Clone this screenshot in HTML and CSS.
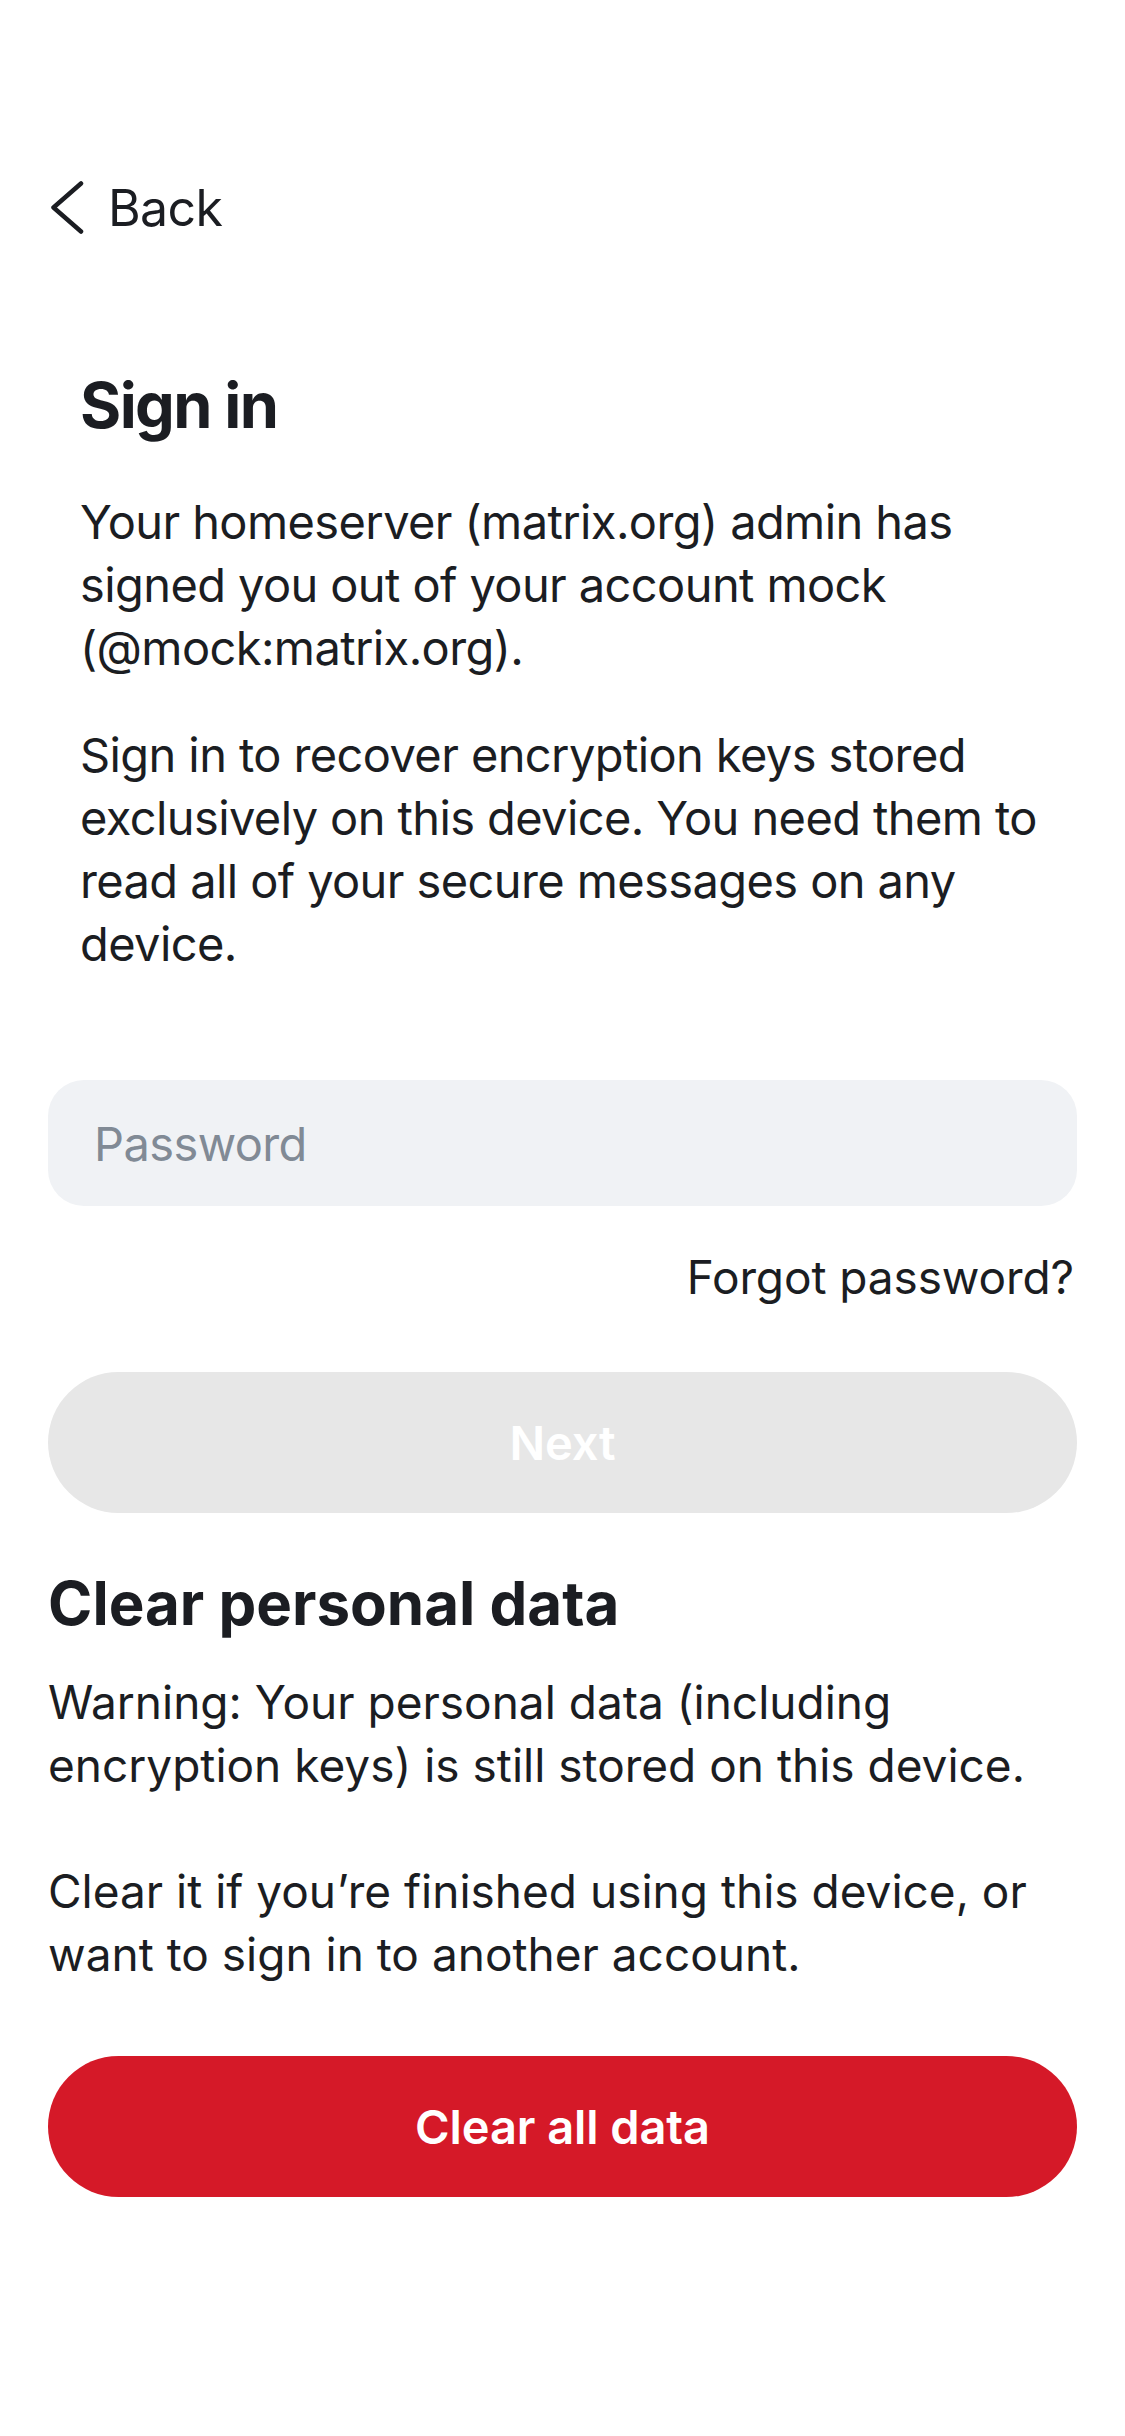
FILE: index.html
```html
<!DOCTYPE html>
<html lang="en">
<head>
<meta charset="utf-8">
<title>Sign in</title>
<link rel="stylesheet" href="styles.css">
</head>
<body>
<div class="screen">
  <nav class="nav">
    <svg class="chevron" width="34" height="56" viewBox="0 0 34 56" aria-hidden="true">
      <path d="M31 3.5 L3.5 27.5 L31 51.5" fill="none" stroke="#1b1d22" stroke-width="4.5" stroke-linecap="round" stroke-linejoin="round"/>
    </svg>
    <span class="nav-label">Back</span>
  </nav>

  <section class="intro">
    <h1 class="title">Sign in</h1>
    <p class="body-text">Your homeserver (matrix.org) admin has signed you out of your account mock (@mock:matrix.org).</p>
    <p class="body-text second">Sign in to recover encryption keys stored exclusively on this device. You need them to read all of your secure messages on any device.</p>
  </section>

  <section class="form">
    <div class="field"><span class="placeholder">Password</span></div>
    <div class="forgot-row"><span class="forgot">Forgot password?</span></div>
    <div class="btn btn-disabled">Next</div>
  </section>

  <section class="clear">
    <h2 class="subtitle">Clear personal data</h2>
    <p class="warn-text">Warning: Your personal data (including encryption keys) is still stored on this device.</p>
    <p class="warn-text gap">Clear it if you&rsquo;re finished using this device, or want to sign in to another account.</p>
    <div class="btn btn-danger">Clear all data</div>
  </section>
</div>
</body>
</html>
```

FILE: styles.css
```css
* { box-sizing: border-box; }

html, body {
  margin: 0;
  padding: 0;
  background: #ffffff;
}

body {
  font-family: Inter, "Noto Sans", "Liberation Sans", sans-serif;
  color: #1b1d22;
  width: 1125px;
  min-height: 2436px;
}

.screen {
  display: flex;
  flex-direction: column;
}

.nav {
  display: flex;
  align-items: center;
  gap: 24px;
  height: 60px;
  margin-top: 178px;
  padding-left: 50px;
}

.chevron { display: block; flex: none; }

.nav-label {
  font-size: 50px;
  line-height: 60px;
  letter-spacing: -0.6px;
}

.intro {
  padding: 0 48px 0 80px;
}

.title {
  margin: 128px 0 0 0;
  font-size: 63px;
  line-height: 78px;
  font-weight: 700;
  letter-spacing: -1.6px;
}

.body-text {
  margin: 46px 0 0 0;
  font-size: 47px;
  line-height: 63px;
  letter-spacing: -0.6px;
}

.body-text.second { margin-top: 44px; }

.form {
  padding: 0 48px;
  margin-top: 105px;
}

.field {
  height: 126px;
  border-radius: 36px;
  background: #f0f2f5;
  display: flex;
  align-items: center;
  padding-left: 46px;
}

.placeholder {
  font-size: 47px;
  color: #818a95;
  letter-spacing: -0.6px;
}

.forgot-row {
  display: flex;
  justify-content: flex-end;
  margin-top: 44px;
  padding-right: 3px;
}

.forgot {
  font-size: 46px;
  line-height: 54px;
  letter-spacing: -0.1px;
}

.btn {
  display: flex;
  align-items: center;
  justify-content: center;
  height: 141px;
  border-radius: 71px;
  font-size: 47px;
  font-weight: 600;
  letter-spacing: -0.1px;
  color: #ffffff;
}

.btn-disabled {
  margin-top: 68px;
  background: #e7e7e7;
}

.btn-danger {
  margin-top: 70px;
  background: #d51928;
}

.clear {
  padding: 0 48px;
}

.subtitle {
  margin: 56px 0 0 0;
  font-size: 60px;
  line-height: 68px;
  font-weight: 700;
  letter-spacing: 0;
}

.warn-text {
  margin: 34px 0 0 0;
  font-size: 46px;
  line-height: 63px;
  letter-spacing: 0;
}

.warn-text.gap { margin-top: 63px; }
```
